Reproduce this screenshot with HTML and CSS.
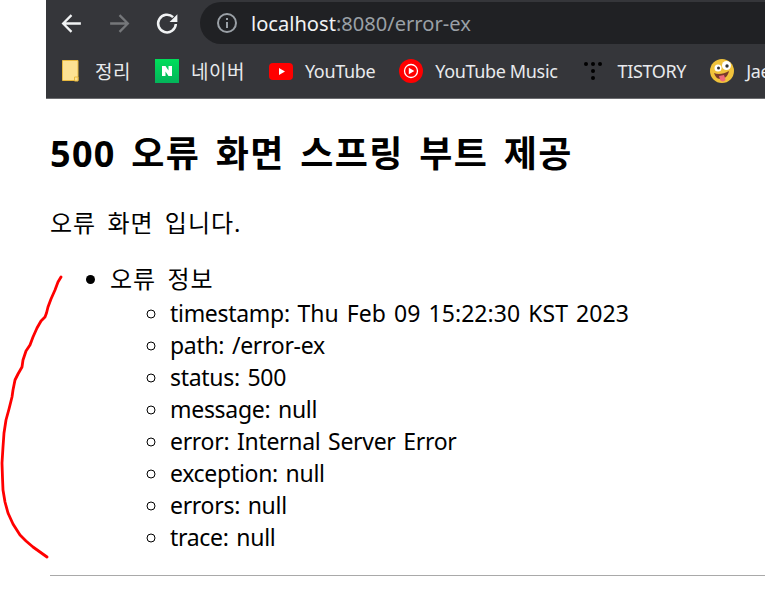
FILE: index.html
```html
<!DOCTYPE html>
<html lang="ko">
<head>
  <meta charset="utf-8">
  <title>localhost:8080/error-ex</title>
  <link rel="stylesheet" href="styles.css">
</head>
<body>
  <div class="chrome">
    <div class="toolbar">
      <svg class="nav-icon" viewBox="0 0 24 24"><path d="M21 12H4M12 4l-8 8 8 8" fill="none" stroke="#f1f3f4" stroke-width="2.2"/></svg>
      <svg class="nav-icon" viewBox="0 0 24 24"><path d="M3 12h17M12 4l8 8-8 8" fill="none" stroke="#75777a" stroke-width="2.2"/></svg>
      <svg class="nav-icon" viewBox="0 0 24 24"><path d="M20 12.5a8.5 8.5 0 1 1-2.6-6.6" fill="none" stroke="#f1f3f4" stroke-width="2.4"/><path d="M21.5 3v7.5H14z" fill="#f1f3f4"/></svg>
      <div class="omnibox">
        <svg class="info-icon" viewBox="0 0 20 20"><circle cx="10" cy="10" r="9" fill="none" stroke="#9aa0a6" stroke-width="2"/><path d="M9 9h2v6H9zM9 5h2v2H9z" fill="#9aa0a6"/></svg>
        <span class="host">localhost</span><span class="url-rest">:8080/error-ex</span>
      </div>
    </div>
    <div class="bookmarks">
      <div class="bookmark bookmark-ko">
        <svg class="bm-icon" viewBox="0 0 24 24"><path d="M3.500 1.500h15.500v20h-15.500z" fill="#fde293" stroke="#e8b93f" stroke-width="1"/><path d="M15.500 22v-4h3.500v4z" fill="#fde293" stroke="#e8b93f" stroke-width="1"/></svg>
        <span>정리</span>
      </div>
      <div class="bookmark bookmark-ko">
        <svg class="bm-icon" viewBox="0 0 24 24"><defs><linearGradient id="naver" x1="0" y1="0" x2="0" y2="1"><stop offset="0" stop-color="#00de5a"/><stop offset="1" stop-color="#03b45a"/></linearGradient></defs><rect width="24" height="24" fill="url(#naver)"/><path d="M7 7h3.500l3 4.500V7H17v10h-3.500l-3-4.500V17H7z" fill="#fff"/></svg>
        <span>네이버</span>
      </div>
      <div class="bookmark">
        <svg class="bm-icon" viewBox="0 0 24 24"><rect y="4" width="24" height="17" rx="4" fill="#f00"/><path d="M10 9l6 3.500-6 3.500z" fill="#fff"/></svg>
        <span>YouTube</span>
      </div>
      <div class="bookmark">
        <svg class="bm-icon" viewBox="0 0 24 24"><circle cx="12" cy="12" r="12" fill="#f00"/><circle cx="12" cy="12" r="6.500" fill="none" stroke="#fff" stroke-width="1.300"/><path d="M9.800 8.800l5.500 3.200-5.500 3.200z" fill="#fff"/></svg>
        <span>YouTube Music</span>
      </div>
      <div class="bookmark">
        <svg class="bm-icon" viewBox="0 0 24 24"><g fill="#000"><circle cx="5" cy="5" r="2"/><circle cx="12" cy="5" r="2"/><circle cx="19" cy="5" r="2"/><circle cx="12" cy="12" r="2"/><circle cx="12" cy="19" r="2"/></g></svg>
        <span>TISTORY</span>
      </div>
      <div class="bookmark">
        <svg class="bm-icon" viewBox="0 0 24 24"><circle cx="12" cy="12" r="12" fill="#f0c23b"/><circle cx="8" cy="9" r="3.500" fill="#fff"/><circle cx="16.500" cy="6.500" r="4.500" fill="#fff"/><circle cx="8.500" cy="9" r="1.500" fill="#333"/><circle cx="17" cy="7" r="1.700" fill="#333"/><path d="M4 14c4 2 10 1 15-2-1 5-4 8-9 8-3 0-5-3-6-6z" fill="#7a3b2a"/><path d="M9 17l5-1 1.500 4.500c-.5 2.500-5 2.500-5.500 0z" fill="#ef6a7a"/></svg>
        <span>Jaehyun</span>
      </div>
    </div>
  </div>

  <main class="content">
    <h1>500 오류 화면 스프링 부트 제공</h1>
    <p>오류 화면 입니다.</p>
    <ul class="outer-list">
      <li>
        <div class="list-title">오류 정보</div>
        <ul class="detail-list">
          <li>timestamp: <span class="date">Thu Feb 09 15:22:30 KST 2023</span></li>
          <li>path: /error-ex</li>
          <li>status: 500</li>
          <li>message: null</li>
          <li>error: Internal Server Error</li>
          <li>exception: null</li>
          <li>errors: null</li>
          <li>trace: null</li>
        </ul>
      </li>
    </ul>
    <hr>
  </main>

  <!-- hand drawn mark over the page -->
  <svg class="scribble" viewBox="0 270 70 300"><path d="M61 277L58 282L55 290L51 299L48 307L46.500 313L45 317L41 321L37 328L33 337L30 345L26 351L23 360L22 367L18 374L15 380L13 390L12 397L9 409L6 420L4 433L3 447L2 463L2.500 478L3 490L5 502L8 513L13 524L20 535L26 541L33 547L40 552L47 557" fill="none" stroke="#f00" stroke-width="2.800" stroke-linejoin="round" stroke-linecap="round"/></svg>
</body>
</html>
```

FILE: styles.css
```css
html, body {
  margin: 0;
  height: 602px;
  overflow: hidden;
  background: white;
}
body {
  font-family: "Noto Sans", "Noto Sans CJK KR", sans-serif;
  color: black;
}
.chrome {
  margin-left: 46px;
  height: 99px;
  background: #35363a;
  border-bottom: 1px solid #6b6c6f;
  box-sizing: border-box;
  overflow: hidden;
}
.toolbar {
  display: flex;
  align-items: center;
  height: 46px;
  padding: 0 0 0 13px;
  gap: 23px;
}
.nav-icon {
  width: 25px;
  height: 25px;
  flex: none;
}
.omnibox {
  display: flex;
  align-items: center;
  flex: 1;
  height: 42px;
  margin-left: -3px;
  padding-left: 17px;
  background: #202124;
  border-radius: 21px 0 0 21px;
  font-size: 20.100px;
}
.info-icon {
  width: 20px;
  height: 20px;
  margin-right: 14px;
}
.host { color: #f1f3f4; }
.url-rest { color: #9aa0a6; }
.bookmarks {
  display: flex;
  align-items: center;
  height: 50px;
  padding-left: 13px;
  gap: 24px;
  white-space: nowrap;
}
.bookmark {
  display: flex;
  align-items: center;
  gap: 12px;
  color: #e8eaed;
  font-size: 18px;
  letter-spacing: -0.350px;
  flex: none;
}
.bookmark-ko {
  font-size: 19px;
  letter-spacing: 0.500px;
}
.bm-icon {
  width: 24px;
  height: 24px;
  flex: none;
}
.content {
  padding-left: 50px;
  font-size: 24px;
  line-height: 32px;
}
h1 {
  margin: 31px 0 0;
  font-size: 36px;
  line-height: 48px;
  font-weight: bold;
  letter-spacing: 1.300px;
  word-spacing: 5px;
}
p {
  margin: 29px 0 0;
  letter-spacing: 1px;
  word-spacing: 4px;
}
.outer-list {
  margin: 24px 0 0;
  padding-left: 60px;
}
.list-title {
  margin-bottom: 2px;
  letter-spacing: 1px;
  word-spacing: 4px;
}
.detail-list {
  margin: 0;
  padding-left: 60px;
  list-style: circle;
  font-size: 23px;
  letter-spacing: -0.300px;
  word-spacing: 2px;
}
.date {
  letter-spacing: 0.050px;
}
hr {
  margin: 22px 0 0;
  border: 0;
  border-top: 1px solid #a9a9a9;
}
.scribble {
  position: absolute;
  left: 0;
  top: 270px;
  width: 70px;
  height: 300px;
}
```
